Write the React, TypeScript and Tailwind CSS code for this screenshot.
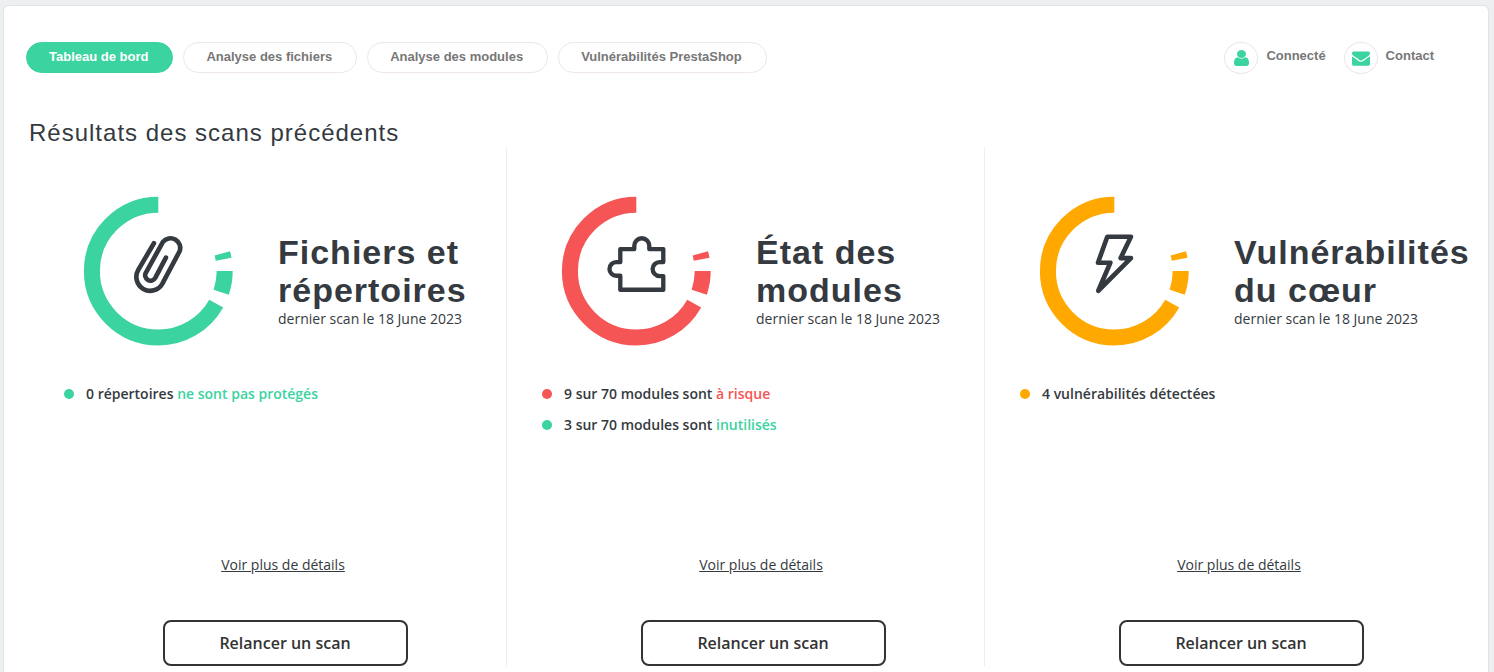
import type { ReactNode } from "react";

const USER_PATH =
  "M1536 1399q0 109-62.5 187t-150.5 78h-854q-88 0-150.5-78t-62.5-187q0-85 8.5-160.5t31.5-152 58.5-131 94-89 134.5-34.5q131 128 313 128t313-128q76 0 134.5 34.5t94 89 58.5 131 31.5 152 8.5 160.5zm-256-887q0 159-112.5 271.5t-271.5 112.5-271.5-112.5-112.5-271.5 112.5-271.5 271.5-112.5 271.5 112.5 112.5 271.5z";
const ENVELOPE_PATH =
  "M1792 710v794q0 66-47 113t-113 47h-1472q-66 0-113-47t-47-113v-794q44 49 101 87 362 246 497 345 57 42 92.5 65.5t94.5 48 110 24.5h2q51 0 110-24.5t94.5-48 92.5-65.5q170-123 498-345 57-39 100-87zm0-294q0 79-49 151t-122 123q-376 261-468 325-10 7-42.5 31t-54 38.5-52 32.5-57.5 27-50 9h-2q-23 0-50-9t-57.5-27-52-32.5-54-38.5-42.5-31q-91-64-262-182.5t-205-142.5q-62-42-117-115.5t-55-136.5q0-78 41.5-130t118.5-52h1472q65 0 112.5 47t47.5 113z";

const tabs = [
  "Tableau de bord",
  "Analyse des fichiers",
  "Analyse des modules",
  "Vulnérabilités PrestaShop",
];

function AccountLink({ icon, label }: { icon: ReactNode; label: string }) {
  return (
    <a href="#" className="flex items-start gap-2 text-[13px] leading-7 font-bold text-[#777]">
      <span className="flex h-8 w-[34px] items-center justify-center rounded-[50%] border border-[#eee6e8] text-[#3bd3a0]">
        {icon}
      </span>
      {label}
    </a>
  );
}

const userIcon = (
  <svg
    viewBox="256 128 1280 1536"
    preserveAspectRatio="none"
    className="h-4 w-[15px]"
    fill="currentColor"
    aria-hidden="true"
  >
    <path d={USER_PATH} />
  </svg>
);

const envelopeIcon = (
  <svg viewBox="0 0 1792 1792" className="size-[18px]" fill="currentColor" aria-hidden="true">
    <path d={ENVELOPE_PATH} />
  </svg>
);

// Segmented gauge: dash lengths are degrees, clockwise from three o'clock.
function Gauge({ color, children }: { color: string; children: ReactNode }) {
  return (
    <svg viewBox="-75.3 -75.1 150 150" className={`size-[150px] shrink-0 ${color}`} fill="none" aria-hidden="true">
      <circle
        r="66.4"
        stroke="currentColor"
        strokeWidth="16"
        pathLength={360}
        strokeDasharray="18.6 10.7 240.7 74.5 5.2 10.3"
      />
      <g stroke="#343a40" strokeLinecap="round" strokeLinejoin="round">
        {children}
      </g>
    </svg>
  );
}

const clip = (
  <path
    transform="translate(-87.7 -86.5) scale(.3333)"
    strokeWidth="14"
    d="M250 176L203 256A41 41 0 0 0 275 298L327 200A29 29 0 0 0 277 172L226 264A16 16 0 0 0 254 280L286 219"
  />
);

const puzzle = (
  <path
    transform="translate(-86 -86) scale(.3333)"
    strokeWidth="13"
    d="M210 192H252V182A22.5 22.5 0 0 1 297 182V192H339V231H328A21 21 0 0 0 328 273H339V314H210V272H198A20.5 20.5 0 0 1 198 231H210Z"
  />
);

const bolt = (
  <path
    transform="translate(-84 -86) scale(.3333)"
    strokeWidth="14"
    d="M231 155H302L271 219H302L204 317L240 233H203Z"
  />
);

type Status = { dot: string; text: string; accent?: string; accentColor?: string };
type Scan = { title: [string, string]; color: string; icon: ReactNode; statuses: Status[] };

const scans: Scan[] = [
  {
    title: ["Fichiers et", "répertoires"],
    color: "text-[#3bd3a0]",
    icon: clip,
    statuses: [
      { dot: "bg-[#3bd3a0]", text: "0 répertoires", accent: "ne sont pas protégés", accentColor: "text-[#3bd3a0]" },
    ],
  },
  {
    title: ["État des", "modules"],
    color: "text-[#f55555]",
    icon: puzzle,
    statuses: [
      { dot: "bg-[#f55555]", text: "9 sur 70 modules sont", accent: "à risque", accentColor: "text-[#f55555]" },
      { dot: "bg-[#3bd3a0]", text: "3 sur 70 modules sont", accent: "inutilisés", accentColor: "text-[#3bd3a0]" },
    ],
  },
  {
    title: ["Vulnérabilités", "du cœur"],
    color: "text-[#ffa800]",
    icon: bolt,
    statuses: [{ dot: "bg-[#ffa800]", text: "4 vulnérabilités détectées" }],
  },
];

function ScanColumn({ scan }: { scan: Scan }) {
  return (
    <section className="flex flex-col border-l border-[#eee] pt-[49px] pl-[35px] font-['Open_Sans',sans-serif] first:border-transparent">
      <div className="flex items-start gap-[45px] pl-[19px]">
        <Gauge color={scan.color}>{scan.icon}</Gauge>
        <div className="pt-[37px] whitespace-nowrap">
          <h2 className="font-['Liberation_Sans',sans-serif] text-[34px] leading-[38px] font-bold tracking-[1px]">
            {scan.title[0]}
            <br />
            {scan.title[1]}
          </h2>
          <p className="text-sm leading-5">dernier scan le 18 June 2023</p>
        </div>
      </div>
      <ul className="mt-[38px] flex min-h-[171px] flex-col gap-[11px]">
        {scan.statuses.map((s) => (
          <li key={s.text} className="flex items-center gap-3 text-sm leading-5 font-semibold">
            <span className={`size-[10px] rounded-full ${s.dot}`} />
            <span>
              {s.text} {s.accent && <span className={s.accentColor}>{s.accent}</span>}
            </span>
          </li>
        ))}
      </ul>
      <a href="#" className="mr-1 self-center text-sm leading-5 underline">
        Voir plus de détails
      </a>
      <button
        type="button"
        className="mt-[45px] h-[46px] w-[245px] self-center rounded-lg border-2 border-[#333] bg-white text-base font-semibold text-[#333]"
      >
        Relancer un scan
      </button>
    </section>
  );
}

export default function App() {
  return (
    <div className="flex min-h-screen flex-col bg-[#edeff1] px-1 pt-[5px] font-['Liberation_Sans',sans-serif] text-[#343a40]">
      <main className="mr-px -ml-px flex-1 rounded-t-md border border-b-0 border-[#dbe6e8] bg-white pt-9 pr-[26px] pb-1 pl-6">
        <header className="flex items-start justify-between pr-7">
          <nav className="-ml-[2px] flex gap-[10px]">
            {tabs.map((tab, i) => (
              <a
                key={tab}
                href="#"
                className={`h-[31px] rounded-full border pr-6 pl-[22px] text-[13px] leading-7 font-bold ${
                  i === 0 ? "border-[#3bd3a0] bg-[#3bd3a0] text-white" : "border-[#eee6e8] text-[#777]"
                }`}
              >
                {tab}
              </a>
            ))}
          </nav>
          <div className="flex gap-[18px]">
            <AccountLink icon={userIcon} label="Connecté" />
            <AccountLink icon={envelopeIcon} label="Contact" />
          </div>
        </header>
        <h1 className="mt-11 pl-px text-2xl leading-[29px] tracking-[1px]">Résultats des scans précédents</h1>
        <div className="grid grid-cols-3">
          {scans.map((scan) => (
            <ScanColumn key={scan.title[0]} scan={scan} />
          ))}
        </div>
      </main>
    </div>
  );
}
